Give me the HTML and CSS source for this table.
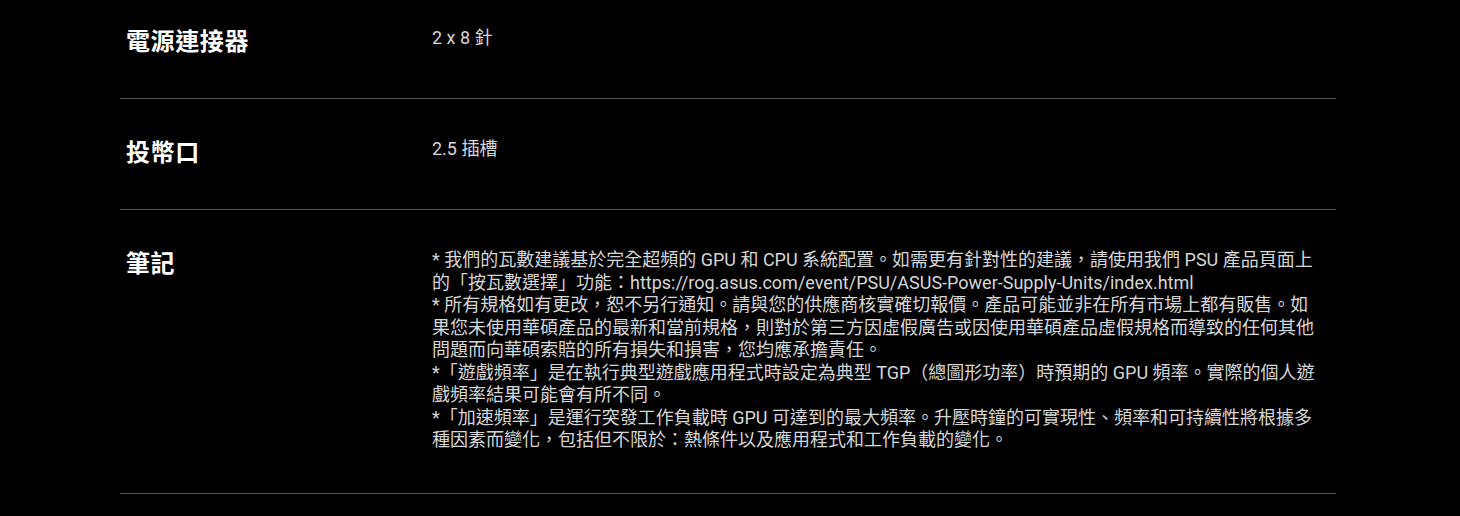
FILE: index.html
```html
<!DOCTYPE html>
<html lang="zh-Hant">
<head>
<meta charset="utf-8">
<title>規格</title>
<link rel="stylesheet" href="styles.css">
</head>
<body>
<div class="specs">
  <div class="spec-row spec-row--first">
    <div class="spec-label">電源連接器</div>
    <div class="spec-value">2 x 8 針</div>
  </div>
  <div class="spec-row">
    <div class="spec-label">投幣口</div>
    <div class="spec-value">2.5 插槽</div>
  </div>
  <div class="spec-row">
    <div class="spec-label">筆記</div>
    <div class="spec-value">* 我們的瓦數建議基於完全超頻的 GPU 和 CPU 系統配置。如需更有針對性的建議，請使用我們 PSU 產品頁面上的「按瓦數選擇」功能：https://rog.asus.com/event/PSU/ASUS-Power-Supply-Units/index.html<br>* 所有規格如有更改，恕不另行通知。請與您的供應商核實確切報價。產品可能並非在所有市場上都有販售。如果您未使用華碩產品的最新和當前規格，則對於第三方因虛假廣告或因使用華碩產品虛假規格而導致的任何其他問題而向華碩索賠的所有損失和損害，您均應承擔責任。<br>*「遊戲頻率」是在執行典型遊戲應用程式時設定為典型 TGP（總圖形功率）時預期的 GPU 頻率。實際的個人遊戲頻率結果可能會有所不同。<br>*「加速頻率」是運行突發工作負載時 GPU 可達到的最大頻率。升壓時鐘的可實現性、頻率和可持續性將根據多種因素而變化，包括但不限於：熱條件以及應用程式和工作負載的變化。</div>
  </div>
</div>
</body>
</html>
```

FILE: styles.css
```css
html, body {
  margin: 0;
  padding: 0;
  background: #000;
  height: 100%;
  overflow: hidden;
}

.specs {
  width: 1216px;
  margin-left: 120px;
  font-family: Roboto, "Noto Sans CJK TC", sans-serif;
}

.spec-row {
  display: grid;
  grid-template-columns: 312px 1fr;
  padding: 36px 0 40px;
  border-bottom: 1px solid #555;
  box-sizing: border-box;
}

.spec-row--first {
  padding-top: 24px;
}

.spec-label {
  padding-left: 6px;
  padding-bottom: 2px;
  color: #fff;
  font-family: "Noto Sans CJK TC", sans-serif;
  font-weight: 700;
  font-size: 24px;
  letter-spacing: 0.6px;
  line-height: 32px;
}

.spec-value {
  padding-top: 3px;
  padding-bottom: 1px;
  padding-right: 14px;
  color: #d6d6d6;
  font-size: 18px;
  line-height: 22.5px;
}
```
